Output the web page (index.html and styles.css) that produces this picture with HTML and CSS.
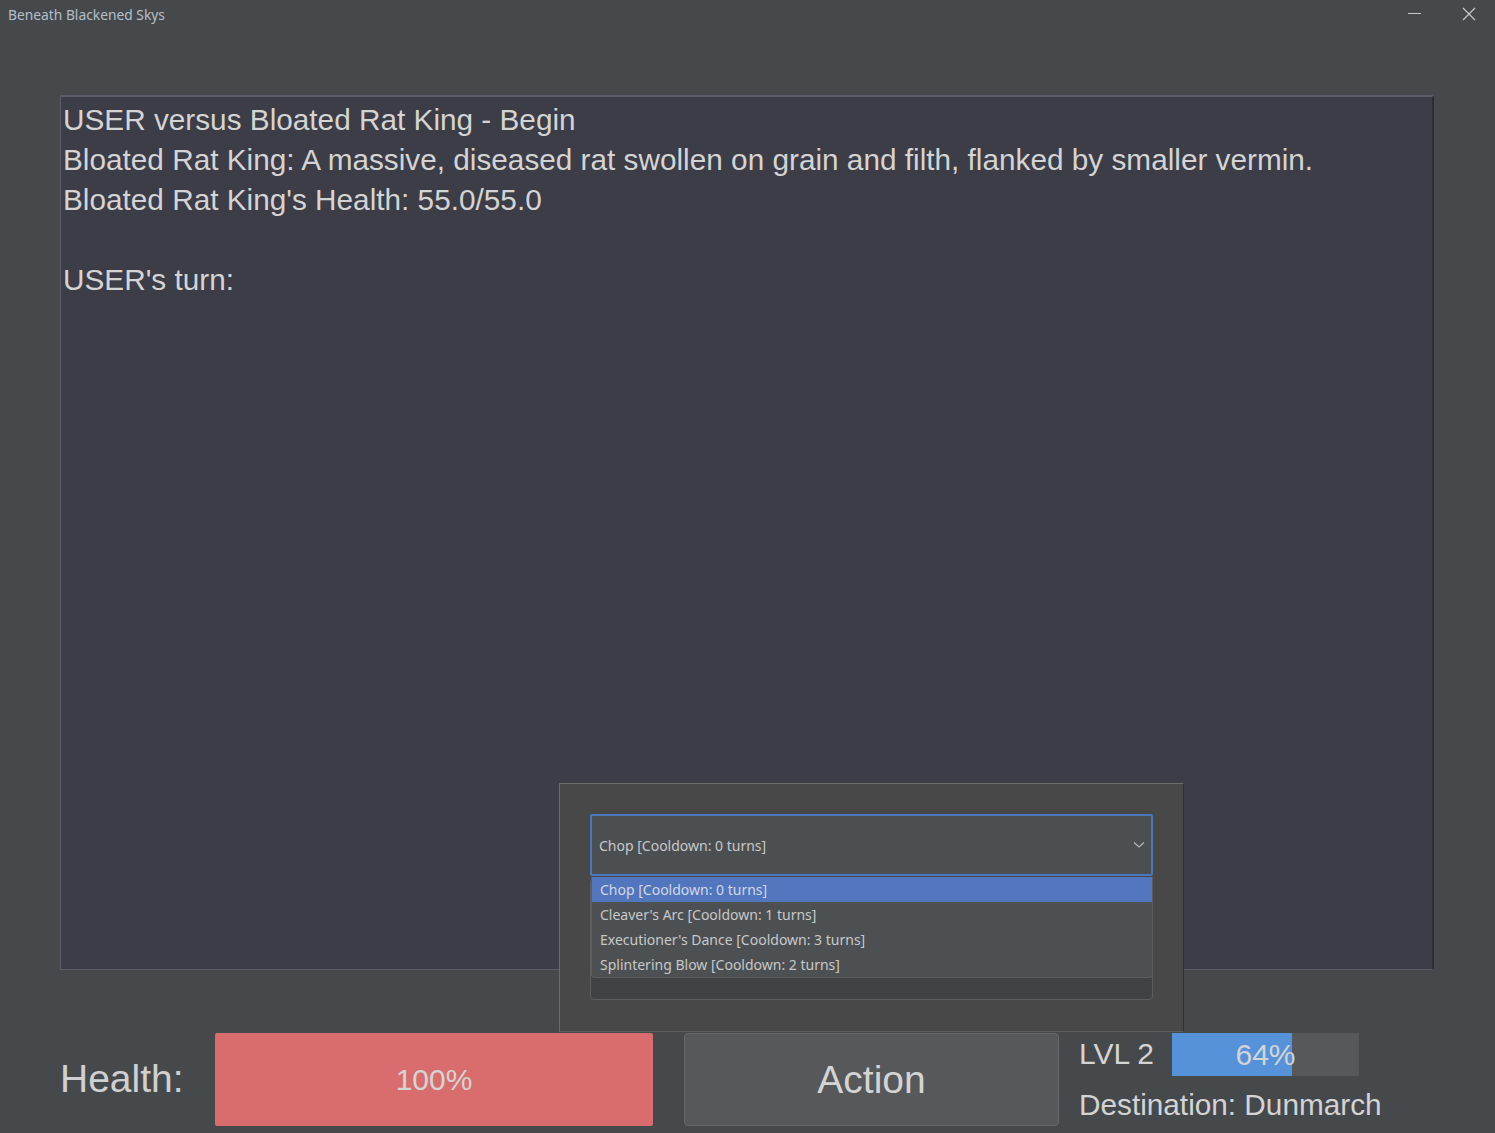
FILE: index.html
```html
<!DOCTYPE html>
<html>
<head>
<meta charset="utf-8">
<title>Beneath Blackened Skys</title>
<link rel="stylesheet" href="styles.css">
</head>
<body>
<div class="window">
  <div class="titlebar">
    <span class="title">Beneath Blackened Skys</span>
    <div class="controls">
      <svg class="ctl" width="46" height="30" viewBox="0 0 46 30"><line x1="8" y1="13.5" x2="21" y2="13.5" stroke="#c8c8c8" stroke-width="1"/></svg>
      <svg class="ctl" width="46" height="30" viewBox="0 0 46 30"><path d="M17 8 L29 20 M29 8 L17 20" stroke="#c8c8c8" stroke-width="1.2" fill="none"/></svg>
    </div>
  </div>
  <div class="content">
    <div class="log">
      <div class="line">USER versus Bloated Rat King - Begin</div>
      <div class="line">Bloated Rat King: A massive, diseased rat swollen on grain and filth, flanked by smaller vermin.</div>
      <div class="line">Bloated Rat King's Health: 55.0/55.0</div>
      <div class="line">&nbsp;</div>
      <div class="line">USER's turn:</div>
    </div>
    <div class="bottom">
      <div class="health-label">Health:</div>
      <div class="health-bar">100%</div>
      <div class="action">Action</div>
      <div class="status">
        <div class="lvl-row">
          <span class="lvl">LVL 2</span>
          <div class="xp">
            <div class="xp-fill" style="width:64%"></div>
            <span class="xp-text">64%</span>
          </div>
        </div>
        <div class="dest">Destination: Dunmarch</div>
      </div>
    </div>
  </div>
  <div class="popup">
    <div class="combo">
      <span class="combo-text">Chop [Cooldown: 0 turns]</span>
      <svg class="chev" width="12" height="8" viewBox="0 0 12 8"><path d="M1 1.5 L6 6 L11 1.5" stroke="#b4b4b4" stroke-width="1.3" fill="none"/></svg>
    </div>
    <div class="under"></div>
    <ul class="menu">
      <li class="item sel">Chop [Cooldown: 0 turns]</li>
      <li class="item">Cleaver's Arc [Cooldown: 1 turns]</li>
      <li class="item">Executioner's Dance [Cooldown: 3 turns]</li>
      <li class="item">Splintering Blow [Cooldown: 2 turns]</li>
    </ul>
  </div>
</div>
</body>
</html>
```
FILE: styles.css
```css
html, body {
  margin: 0;
  padding: 0;
  background: #46494c;
}
.window {
  position: relative;
  width: 1495px;
  height: 1133px;
  overflow: hidden;
  background: #46494c;
  font-family: "Liberation Sans", Arial, sans-serif;
  color: #d2d2d2;
}
.titlebar {
  height: 30px;
  display: flex;
  align-items: center;
  justify-content: space-between;
}
.title {
  font-family: "Noto Sans", "Open Sans", sans-serif;
  font-size: 13.8px;
  color: #b4bfca;
  padding-left: 8px;
  margin-top: -2px;
}
.controls {
  display: flex;
  margin-right: 3px;
}
.ctl { display: block; }
.content {
  padding: 65px 61px 0 60px;
}
.log {
  height: 875px;
  box-sizing: border-box;
  background: #3c3d47;
  border-top: 2px solid #5d5e6b;
  border-left: 1px solid #5b5c66;
  border-right: 2px solid #2e2f36;
  border-bottom: 1px solid #5b5c66;
  padding: 3px 0 0 2px;
  font-size: 29.75px;
  line-height: 40px;
  color: #d4d4d4;
}
.bottom {
  margin-top: 63px;
  height: 93px;
  display: flex;
  align-items: stretch;
}
.health-label {
  width: 155px;
  font-size: 39px;
  display: flex;
  align-items: center;
  color: #d0d0d0;
  margin-top: -2px;
}
.health-bar {
  width: 438px;
  background: #d96d6d;
  border-radius: 2px;
  display: flex;
  align-items: center;
  justify-content: center;
  font-size: 30px;
  color: #d4d4d4;
}
.action {
  width: 375px;
  margin-left: 31px;
  box-sizing: border-box;
  background: #57585a;
  border: 1px solid #676869;
  border-radius: 4px;
  display: flex;
  align-items: center;
  justify-content: center;
  font-size: 39px;
  color: #d4d4d4;
}
.status {
  margin-left: 20px;
  display: flex;
  flex-direction: column;
}
.lvl-row {
  height: 43px;
  display: flex;
  align-items: center;
}
.lvl {
  width: 93px;
  font-size: 30px;
  color: #d4d4d4;
  margin-top: -2px;
}
.xp {
  position: relative;
  width: 187px;
  height: 43px;
  background: #56595c;
  display: flex;
  align-items: center;
  justify-content: center;
}
.xp-fill {
  position: absolute;
  left: 0;
  top: 0;
  bottom: 0;
  background: #5592da;
}
.xp-text {
  position: relative;
  font-size: 30px;
  color: #d4d4d4;
}
.dest {
  margin-top: 12px;
  font-size: 29.75px;
  color: #d4d4d4;
}
.popup {
  position: absolute;
  left: 559px;
  top: 783px;
  width: 625px;
  height: 249px;
  box-sizing: border-box;
  background: #484848;
  border-top: 1px solid #6c6c6c;
  border-left: 1px solid #6c6c6c;
  border-right: 1px solid #323232;
  border-bottom: 1px solid #5e5e5e;
  padding: 30px 30px 0 30px;
  font-family: "Noto Sans", "Open Sans", sans-serif;
}
.combo {
  height: 62px;
  box-sizing: border-box;
  width: 563px;
  border: 2px solid #4a78bf;
  border-radius: 2px;
  background: #4b4f52;
  display: flex;
  align-items: center;
  justify-content: space-between;
  padding: 0 6px 0 7px;
}
.combo-text {
  font-size: 14px;
  color: #c8c8c8;
}
.chev { display: block; }
.under {
  margin-top: 2px;
  width: 563px;
  height: 122px;
  box-sizing: border-box;
  background: #404345;
  border: 1px solid #5c5e60;
  border-radius: 4px;
}
.menu {
  position: absolute;
  left: 31px;
  top: 93px;
  width: 562px;
  margin: 0;
  padding: 0;
  list-style: none;
  background: #4c5053;
  border: 1px solid #5c5e60;
  border-top: none;
  border-radius: 0 0 4px 4px;
  box-sizing: border-box;
  height: 101px;
  overflow: hidden;
}
.item {
  height: 25px;
  line-height: 25px;
  padding-left: 8px;
  font-size: 14px;
  color: #c8c8c8;
}
.item.sel {
  background: #5176be;
  color: #d2d8e6;
}
```
